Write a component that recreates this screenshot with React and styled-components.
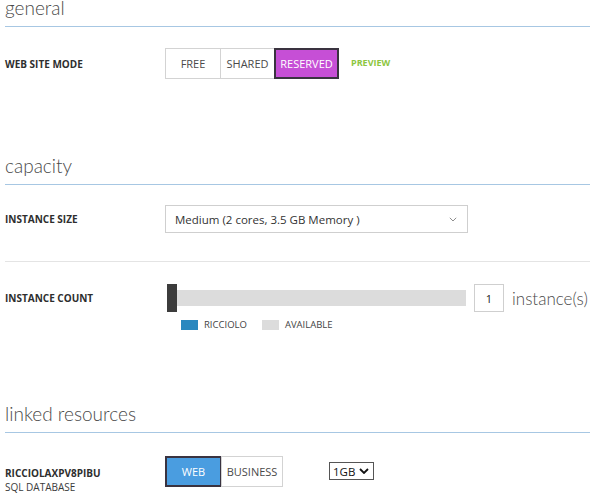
import styled, { createGlobalStyle } from 'styled-components';

const GlobalStyle = createGlobalStyle`
  body {
    margin: 0;
    background: #ffffff;
    font-family: 'Open Sans', 'Liberation Sans', sans-serif;
    color: #3b3b3b;
  }
`;

const Page = styled.div`
  width: 590px;
  height: 497px;
  overflow: hidden;
  padding-left: 5px;
  box-sizing: border-box;
`;

const Section = styled.section`
  margin-top: ${(p) => p.$top}px;
`;

const Heading = styled.h2`
  margin: 0;
  font-family: Lato, 'Open Sans', sans-serif;
  font-size: 19px;
  font-weight: 300;
  line-height: 26px;
  color: #4a4a4a;
  padding-bottom: 5px;
  border-bottom: 1px solid #a7c7e3;
`;

const Row = styled.div`
  display: flex;
  align-items: ${(p) => p.$align || 'center'};
  padding: ${(p) => p.$pad};
  border-bottom: ${(p) => (p.$divider ? '1px solid #e4e4e4' : 'none')};
`;

const Label = styled.div`
  width: 160px;
  flex-shrink: 0;
  margin-top: ${(p) => p.$offset || 0}px;
  font-size: 10px;
  font-weight: 700;
  line-height: 14px;
  text-transform: uppercase;
  color: #2e2e2e;
`;

const SubLabel = styled.div`
  font-weight: 400;
  color: #3b3b3b;
`;

const Toggle = styled.div`
  display: flex;
`;

const ToggleButton = styled.div`
  box-sizing: border-box;
  width: ${(p) => p.$w}px;
  height: 31px;
  display: flex;
  align-items: center;
  justify-content: center;
  font-size: 11px;
  text-transform: uppercase;
  color: ${(p) => (p.$on ? '#ffffff' : '#4a4a4a')};
  background: ${(p) => (p.$on ? p.$color : '#ffffff')};
  border: ${(p) => (p.$on ? '2px solid #3a3340' : '1px solid #d3d3d3')};
  margin-left: ${(p) => (p.$first ? '0' : '-1px')};
`;

const Preview = styled.span`
  margin-left: 12px;
  font-size: 9px;
  font-weight: 700;
  color: #8dc63f;
  align-self: center;
  margin-top: -2px;
`;

const SelectBox = styled.div`
  box-sizing: border-box;
  width: 303px;
  height: 28px;
  border: 1px solid #cfcfcf;
  display: flex;
  align-items: center;
  justify-content: space-between;
  padding: 0 10px 0 9px;
  font-size: 11.5px;
  color: #333;
`;

const Controls = styled.div`
  display: flex;
  flex-direction: column;
`;

const SliderLine = styled.div`
  display: flex;
  align-items: center;
  margin-left: 2px;
`;

const Handle = styled.div`
  width: 10px;
  height: 28px;
  background: #3c3c3c;
`;

const Track = styled.div`
  width: 289px;
  height: 16px;
  background: #dcdcdc;
`;

const CountInput = styled.div`
  box-sizing: border-box;
  width: 30px;
  height: 28px;
  margin-left: 8px;
  border: 1px solid #cfcfcf;
  display: flex;
  align-items: center;
  justify-content: center;
  font-size: 11px;
  color: #222;
`;

const Unit = styled.span`
  margin-left: 8px;
  font-family: Lato, 'Open Sans', sans-serif;
  font-size: 17px;
  font-weight: 300;
  color: #4a4a4a;
`;

const Legend = styled.div`
  display: flex;
  align-items: center;
  margin: 6px 0 0 16px;
`;

const Swatch = styled.span`
  width: 17px;
  height: 10px;
  background: ${(p) => p.$color};
  margin-right: 6px;
`;

const LegendText = styled.span`
  font-size: 9.5px;
  text-transform: uppercase;
  color: #444;
  margin-right: 15px;
`;

const SmallSelect = styled.div`
  box-sizing: border-box;
  margin-left: 46px;
  margin-top: 6px;
  width: 45px;
  height: 18px;
  border: 1px solid #555;
  display: flex;
  align-items: center;
  justify-content: space-between;
  padding: 0 4px 0 3px;
  font-size: 11.5px;
  color: #111;
`;

const Chevron = ({ size = 8, color = '#888', width = 1.2 }) => (
  <svg width={size} height={size * 0.6} viewBox="0 0 10 6">
    <polyline points="1,1 5,5 9,1" fill="none" stroke={color} strokeWidth={width} />
  </svg>
);

export default function App() {
  return (
    <Page>
      <GlobalStyle />
      <Section $top={-5}>
        <Heading>general</Heading>
        <Row $pad="21px 0 0 0">
          <Label>Web site mode</Label>
          <Toggle>
            <ToggleButton $w={56} $first>Free</ToggleButton>
            <ToggleButton $w={55}>Shared</ToggleButton>
            <ToggleButton $w={65} $on $color="#c64fd6">Reserved</ToggleButton>
          </Toggle>
          <Preview>PREVIEW</Preview>
        </Row>
      </Section>

      <Section $top={74}>
        <Heading>capacity</Heading>
        <Row $pad="20px 0 28px 0" $divider>
          <Label>Instance size</Label>
          <SelectBox>
            <span>Medium (2 cores, 3.5 GB Memory )</span>
            <Chevron />
          </SelectBox>
        </Row>
        <Row $pad="22px 0 0 0" $align="flex-start">
          <Label $offset={7}>Instance count</Label>
          <Controls>
            <SliderLine>
              <Handle />
              <Track />
              <CountInput>1</CountInput>
              <Unit>instance(s)</Unit>
            </SliderLine>
            <Legend>
              <Swatch $color="#2a88bf" />
              <LegendText>Ricciolo</LegendText>
              <Swatch $color="#dcdcdc" />
              <LegendText>Available</LegendText>
            </Legend>
          </Controls>
        </Row>
      </Section>

      <Section $top={70}>
        <Heading>linked resources</Heading>
        <Row $pad="23px 0 0 0" $align="flex-start">
          <Label $offset={10}>
            RICCIOLAXPV8PIBU
            <SubLabel>SQL Database</SubLabel>
          </Label>
          <Toggle>
            <ToggleButton $w={57} $first $on $color="#4a9de0">Web</ToggleButton>
            <ToggleButton $w={62}>Business</ToggleButton>
          </Toggle>
          <SmallSelect>
            <span>1GB</span>
            <Chevron size={10} color="#111" width={1.8} />
          </SmallSelect>
        </Row>
      </Section>
    </Page>
  );
}
